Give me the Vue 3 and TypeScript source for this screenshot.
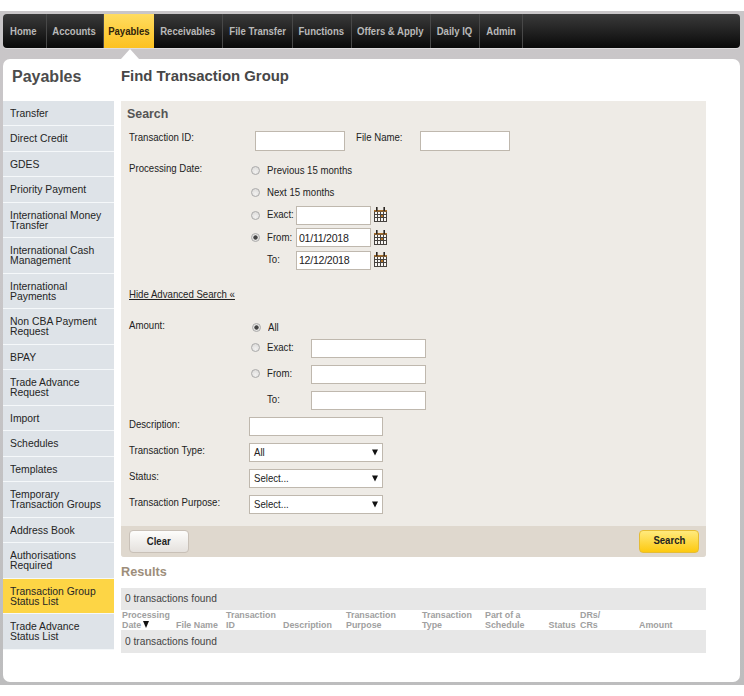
<script setup lang="ts">
import { reactive, ref } from 'vue'

interface NavItem { label: string; width: number; active?: boolean }
interface SideItem { lines: string[]; active?: boolean }

const nav: NavItem[] = [
  { label: 'Home', width: 43.5 },
  { label: 'Accounts', width: 57 },
  { label: 'Payables', width: 50.5, active: true },
  { label: 'Receivables', width: 69 },
  { label: 'File Transfer', width: 70 },
  { label: 'Functions', width: 58.5 },
  { label: 'Offers & Apply', width: 79.5 },
  { label: 'Daily IQ', width: 48.5 },
  { label: 'Admin', width: 43.5 },
]

const side: SideItem[] = [
  { lines: ['Transfer'] },
  { lines: ['Direct Credit'] },
  { lines: ['GDES'] },
  { lines: ['Priority Payment'] },
  { lines: ['International Money', 'Transfer'] },
  { lines: ['International Cash', 'Management'] },
  { lines: ['International', 'Payments'] },
  { lines: ['Non CBA Payment', 'Request'] },
  { lines: ['BPAY'] },
  { lines: ['Trade Advance', 'Request'] },
  { lines: ['Import'] },
  { lines: ['Schedules'] },
  { lines: ['Templates'] },
  { lines: ['Temporary', 'Transaction Groups'] },
  { lines: ['Address Book'] },
  { lines: ['Authorisations', 'Required'] },
  { lines: ['Transaction Group', 'Status List'], active: true },
  { lines: ['Trade Advance', 'Status List'] },
]

const dateMode = ref('from')
const dateRows = [
  { key: 'prev', label: 'Previous 15 months', radio: true, field: false },
  { key: 'next', label: 'Next 15 months', radio: true, field: false },
  { key: 'exact', label: 'Exact:', radio: true, field: true },
  { key: 'from', label: 'From:', radio: true, field: true },
  { key: 'to', label: 'To:', radio: false, field: true },
]
const dates = reactive<Record<string, string>>({ exact: '', from: '01/11/2018', to: '12/12/2018' })

const amountMode = ref('all')
const amountRows = [
  { key: 'all', label: 'All', radio: true, field: false },
  { key: 'exact', label: 'Exact:', radio: true, field: true },
  { key: 'from', label: 'From:', radio: true, field: true },
  { key: 'to', label: 'To:', radio: false, field: true },
]
const amounts = reactive<Record<string, string>>({ exact: '', from: '', to: '' })

const selects = [
  { label: 'Transaction Type:', value: 'All' },
  { label: 'Status:', value: 'Select...' },
  { label: 'Transaction Purpose:', value: 'Select...' },
]

const columns: string[][] = [
  ['Processing', 'Date'],
  ['File Name'],
  ['Transaction', 'ID'],
  ['Description'],
  ['Transaction', 'Purpose'],
  ['Transaction', 'Type'],
  ['Part of a', 'Schedule'],
  ['Status'],
  ['DRs/', 'CRs'],
  ['Amount'],
]
</script>

<template>
  <div class="page">
    <nav class="nav">
      <a v-for="n in nav" :key="n.label" class="nav-item" :class="{ active: n.active }" :style="{ width: n.width + 'px' }">
        <span>{{ n.label }}</span>
      </a>
    </nav>

    <div class="panel">
      <aside class="side">
        <h2>Payables</h2>
        <ul>
          <li v-for="s in side" :key="s.lines.join()" :class="{ active: s.active }">
            <span v-for="l in s.lines" :key="l">{{ l }}</span>
          </li>
        </ul>
      </aside>

      <main class="main">
        <h1>Find Transaction Group</h1>

        <form class="form" @submit.prevent>
          <h3>Search</h3>
          <div class="row ids">
            <label class="lead t">Transaction ID:</label>
            <input class="box id-box" />
            <label class="file t">File Name:</label>
            <input class="box id-box" />
          </div>

          <div class="group dates">
            <label class="lead t">Processing Date:</label>
            <div>
              <div v-for="r in dateRows" :key="r.key" class="opt">
                <i v-if="r.radio" class="radio" :class="{ on: dateMode === r.key }" @click="dateMode = r.key"></i>
                <i v-else class="no-radio"></i>
                <span class="opt-label t">{{ r.label }}</span>
                <template v-if="r.field">
                  <input v-model="dates[r.key]" class="box date-box" />
                  <svg class="cal" width="13" height="15" viewBox="0 0 13 15">
                    <rect y="4" width="13" height="11" fill="#47433f" />
                    <g fill="#f8f6f3">
                      <rect x="1" y="5" width="2" height="2" /><rect x="4" y="5" width="2" height="2" /><rect x="7" y="5" width="2" height="2" /><rect x="10" y="5" width="2" height="2" />
                      <rect x="1" y="8" width="2" height="2" /><rect x="4" y="8" width="2" height="2" /><rect x="10" y="8" width="2" height="2" />
                      <rect x="1" y="11" width="2" height="3" /><rect x="4" y="11" width="2" height="3" /><rect x="7" y="11" width="2" height="3" /><rect x="10" y="11" width="2" height="3" />
                    </g>
                    <rect x="7" y="8" width="2" height="2" fill="#b8772a" />
                    <rect y="3" width="13" height="1.6" fill="#a8702c" />
                    <rect x="2" width="1.6" height="4" fill="#2b2622" />
                    <rect x="9.4" width="1.6" height="4" fill="#2b2622" />
                  </svg>
                </template>
              </div>
            </div>
          </div>

          <div class="toggle"><a class="t">Hide Advanced Search «</a></div>

          <div class="group amounts">
            <label class="lead t">Amount:</label>
            <div>
              <div v-for="r in amountRows" :key="r.key" class="opt" :class="{ first: !r.field }">
                <i v-if="r.radio" class="radio" :class="{ on: amountMode === r.key }" @click="amountMode = r.key"></i>
                <i v-else class="no-radio"></i>
                <span class="opt-label t">{{ r.label }}</span>
                <input v-if="r.field" v-model="amounts[r.key]" class="box amount-box" />
              </div>
            </div>
          </div>

          <div class="row field">
            <label class="t">Description:</label>
            <input class="box wide-box" />
          </div>
          <div v-for="s in selects" :key="s.label" class="row field">
            <label class="t">{{ s.label }}</label>
            <div class="box wide-box select">
              <span class="t">{{ s.value }}</span>
              <svg width="6" height="7" viewBox="0 0 6 7"><path d="M0 0.5H6L3 6.5Z" fill="#111" /></svg>
            </div>
          </div>

          <footer>
            <button class="btn clear" type="reset"><span>Clear</span></button>
            <button class="btn search" type="submit"><span>Search</span></button>
          </footer>
        </form>

        <h3 class="results-title">Results</h3>
        <div class="bar"><span>0 transactions found</span></div>
        <div class="cols">
          <div v-for="(c, i) in columns" :key="i">
            <span v-for="(l, j) in c" :key="j">{{ l }}<svg v-if="i === 0 && j === 1" width="6" height="7" viewBox="0 0 6 7"><path d="M0 0H6L3 7Z" fill="#111" /></svg></span>
          </div>
        </div>
        <div class="bar last"><span>0 transactions found</span></div>
      </main>
    </div>
  </div>
</template>

<style>
body { background: #fff; }
</style>

<style scoped>
.page {
  box-sizing: border-box;
  width: 744px;
  height: 674px;
  margin-top: 11px;
  padding: 3px 4px 3px 3px;
  background: linear-gradient(#c9c6c8, #c8c6c8 40%, #bdbdbe);
  font-family: "Liberation Sans", Arial, sans-serif;
  font-size: 11px;
  color: #222;
}
* { box-sizing: border-box; }
h1, h2, h3, ul { margin: 0; padding: 0; }
.nav {
  display: flex;
  height: 34px;
  border-radius: 4px;
  background: linear-gradient(#3a3a3a, #222 50%, #090909);
  box-shadow: 0 1px 0 #dedcde;
}
.nav-item {
  display: flex;
  position: relative;
  justify-content: center;
  align-items: center;
  padding-bottom: 1px;
  border-right: 1px solid #484848;
  color: #b9b9b9;
  font-size: 11px;
  font-weight: bold;
  white-space: nowrap;
}
.nav-item span { transform: scaleX(0.867); }
.nav-item:first-child span { margin-right: 2px; }
.nav-item.active { background: linear-gradient(#ffdc60, #fcc120); color: #30240a; border-right: 0; }
.nav-item.active::after {
  content: "";
  position: absolute;
  left: 17px;
  top: 35px;
  border: solid transparent;
  border-width: 0 9.5px 10px;
  border-bottom-color: #fff;
}
.panel { display: flex; height: 623px; margin-top: 11px; border-radius: 7px; background: #fff; }
.side { width: 111px; }
h2 { height: 42px; padding-left: 9px; font-size: 16px; line-height: 36px; color: #4c4c4c; }
ul { list-style: none; }
li {
  display: flex;
  flex-direction: column;
  padding: 7px 0 7.3px 7px;
  border-bottom: 1px solid #f5f8fa;
  background: #dee3e8;
  line-height: 10px;
  font-size: 10.9px;
  color: #252525;
  white-space: nowrap;
}
li span { height: 10.13px; transform: scaleX(0.954); transform-origin: left center; }
li.active { background: #fdd545; }
.main { width: 585px; margin-left: 7px; }
h1 { height: 42px; font-size: 14.9px; line-height: 34px; color: #474747; }
.form { height: 456px; background: #eeebe6; border-radius: 0 0 3px 3px; display: flex; flex-direction: column; }
h3 { height: 25px; padding-left: 6px; font-size: 12.4px; line-height: 26px; color: #555; }
.t { display: inline-block; transform: translateY(-1px) scaleX(0.875); transform-origin: left center; white-space: nowrap; }
.row { display: flex; padding-left: 8px; }
.lead { width: 122px; flex: none; }
.ids { height: 30px; align-items: center; }
.ids label { padding-bottom: 7px; }
.ids .lead { width: 126px; }
.file { width: 64px; margin-left: 11px; }
.box {
  height: 19px;
  margin: 0;
  padding: 0 2px;
  border: 1px solid #bfb8ae;
  border-radius: 0;
  background: #fff;
  font: 10.6px "Liberation Sans", Arial, sans-serif;
  color: #222;
  outline: 0;
}
.id-box { width: 90px; height: 20px; }
.group { display: flex; padding-left: 8px; }
.dates { margin-top: 3px; }
.dates .lead { padding-top: 4px; }
.dates .opt:first-child .t { transform: scaleX(0.875); }
.opt { display: flex; align-items: center; height: 22.5px; }
.radio, .no-radio { width: 9px; height: 9px; flex: none; margin-right: 7px; }
.radio { border: 1px solid #aaa; border-radius: 50%; background: radial-gradient(circle at 50% 70%, #f2f1f0, #d9d8d6); }
.radio.on { background: radial-gradient(circle, #444 0 1.8px, #e5e4e2 2.5px); }
.opt-label { width: 29px; }
.date-box { width: 75px; letter-spacing: -0.27px; }
.cal { margin: 0 0 1px 3px; }
.toggle { height: 22px; margin-top: 12px; padding-left: 8px; line-height: 22px; }
.toggle a { text-decoration: underline; text-underline-offset: 1px; }
.amounts { margin-top: 12px; }
.amounts .lead { padding-top: 2px; }
.amounts .opt { height: 26px; }
.amounts .opt.first { height: 18px; padding: 1px 0 0 1px; }
.amounts .opt:not(.first) .radio { margin-bottom: 2px; }
.amounts .opt.first .t { transform: scaleX(0.875); }
.amounts .opt-label { width: 44px; }
.amounts .opt:not(.first) .opt-label { padding-bottom: 1px; }
.amount-box { width: 115px; }
.field { height: 26px; align-items: center; }
.field label { width: 120px; padding-bottom: 4px; }
.wide-box { width: 134px; }
.select { display: flex; align-items: center; justify-content: space-between; padding: 1px 4px 0; font-size: 11px; }
.select svg { margin-bottom: 2px; }
footer { display: flex; justify-content: space-between; align-items: center; height: 31px; margin-top: auto; padding: 0 7px 0 8px; background: #dfd8ce; border-radius: 0 0 3px 3px; }
.btn { width: 60px; height: 23px; padding: 0 0 1px; border-radius: 4px; font: bold 11px "Liberation Sans", Arial, sans-serif; color: #222; }
.btn span { display: inline-block; transform: scaleX(0.87); }
.clear { border: 1px solid #c8c0b7; background: linear-gradient(#fdfdfc, #e5e1dd); }
.search { border: 1px solid #e5bc35; background: linear-gradient(#ffea7d, #fdc90f); }
.search span { transform: translateY(-1px) scaleX(0.87); }
.results-title { height: 30.5px; padding: 0; font-size: 12.7px; line-height: 31px; color: #9d8e7b; }
.bar { height: 22.5px; padding-left: 4px; background: #e7e7e7; font-size: 10.9px; line-height: 20px; color: #444; }
.bar.last { line-height: 22px; }
.bar span { display: inline-block; transform: scaleX(0.936); transform-origin: left center; }
.cols {
  display: grid;
  grid-template-columns: 54px 50px 57px 63px 76px 63px 63.5px 31.5px 59px 1fr;
  align-items: end;
  height: 20px;
  padding-left: 1px;
  font-size: 8.9px;
  font-weight: bold;
  line-height: 10px;
  color: #a0a0a0;
  white-space: nowrap;
}
.cols span { display: block; height: 10px; }
.cols svg { margin-left: 2px; }
</style>
